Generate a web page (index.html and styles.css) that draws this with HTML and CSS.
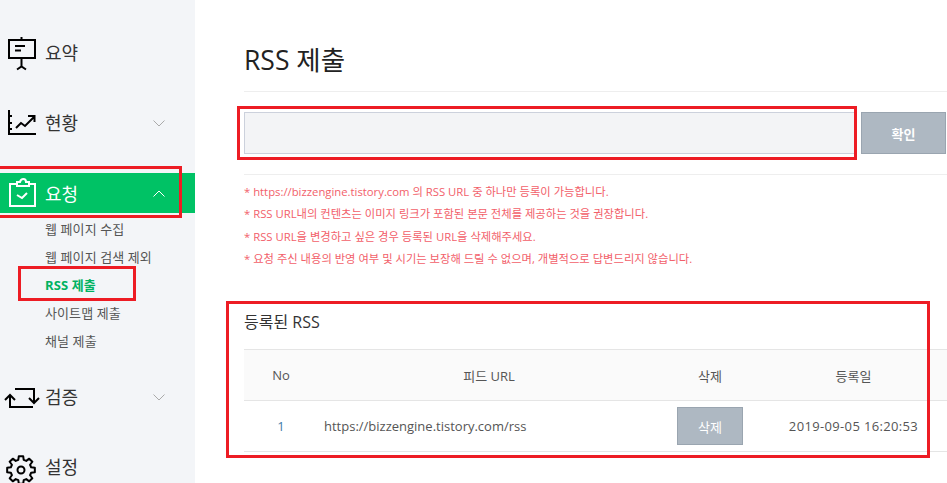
FILE: index.html

```html
<!DOCTYPE html>
<html lang="ko">
<head>
<meta charset="UTF-8">
<meta name="viewport" content="width=device-width, initial-scale=1.0">
<title>RSS 제출</title>
<link rel="stylesheet" href="styles.css">
</head>
<body>
<div class="page">
  <nav class="sidebar">
    <a class="menu">
      <svg class="icon" viewBox="0 0 32 34" fill="none" stroke="#000" stroke-width="2"><path d="M3 4h26v18H3zM15.500 1v3M15.500 22v9M11 33.500l4.500-3 4.500 3M9 10h10M9 14.500h6"/></svg>
      <span class="menu-label">요약</span>
    </a>
    <a class="menu">
      <svg class="icon" viewBox="0 0 32 34" fill="none" stroke="#000" stroke-width="2"><path d="M3 4v24h27M3 10h3M3 17h3M3 23h3M10 22l5-5 4 3 9-9M22 10h6.500v6"/></svg>
      <span class="menu-label">현황</span>
      <svg class="chev" viewBox="0 0 12 7" fill="none" stroke="#aaa"><path d="M.5.500l5.500 5.500L11.500.500"/></svg>
    </a>
    <a class="menu active">
      <svg class="icon" viewBox="0 0 32 34" fill="none" stroke="#fff" stroke-width="2"><path d="M11 8H4v22h25V8h-7M11 10V6h3c1-4 6-4 6 0h3v4zM11 19l5 3 5-5"/></svg>
      <span class="menu-label">요청</span>
      <svg class="chev" viewBox="0 0 12 7" fill="none" stroke="#fff"><path d="M.5 6.500L6 1l5.500 5.500"/></svg>
    </a>
    <ul class="submenu">
      <li>웹 페이지 수집</li>
      <li>웹 페이지 검색 제외</li>
      <li class="current">RSS 제출</li>
      <li>사이트맵 제출</li>
      <li>채널 제출</li>
    </ul>
    <a class="menu after-sub">
      <svg class="icon" viewBox="0 0 32 34" fill="none" stroke="#000" stroke-width="2"><path d="M9 9h19v13M23 18l5 5 5-5M-1 20l5-5 5 5M4 15v12h23"/></svg>
      <span class="menu-label">검증</span>
      <svg class="chev" viewBox="0 0 12 7" fill="none" stroke="#aaa"><path d="M.5.500l5.500 5.500L11.500.500"/></svg>
    </a>
    <a class="menu">
      <svg class="icon" viewBox="0 0 32 34" fill="none" stroke="#000" stroke-width="2" stroke-linejoin="round"><g transform="translate(15 20)"><circle r="3.500"/><path d="M10.140-2.720L13.830-2.190V2.190L10.140 2.720L9.090 5.250L11.330 8.230L8.230 11.330L5.250 9.090L2.720 10.140L2.190 13.830H-2.190L-2.720 10.140L-5.250 9.090L-8.230 11.330L-11.330 8.230L-9.090 5.250L-10.140 2.720L-13.830 2.190V-2.190L-10.140-2.720L-9.090-5.250L-11.330-8.230L-8.230-11.330L-5.250-9.090L-2.720-10.140L-2.190-13.830H2.190L2.720-10.140L5.250-9.090L8.230-11.330L11.330-8.230L9.090-5.250Z"/></g></svg>
      <span class="menu-label">설정</span>
    </a>
  </nav>

  <main class="content">
    <h1 class="title">RSS 제출</h1>
    <div class="url-form">
      <input class="url-input" type="text">
      <button class="btn btn-ok">확인</button>
    </div>
    <ul class="notes">
      <li>* https://bizzengine.tistory.com 의 RSS URL 중 하나만 등록이 가능합니다.</li>
      <li>* RSS URL내의 컨텐츠는 이미지 링크가 포함된 본문 전체를 제공하는 것을 권장합니다.</li>
      <li>* RSS URL을 변경하고 싶은 경우 등록된 URL을 삭제해주세요.</li>
      <li>* 요청 주신 내용의 반영 여부 및 시기는 보장해 드릴 수 없으며, 개별적으로 답변드리지 않습니다.</li>
    </ul>
    <h2 class="sub-title">등록된 RSS</h2>
    <table class="rss-table">
      <colgroup><col class="c-no"><col class="c-url"><col class="c-del"><col class="c-date"></colgroup>
      <thead>
        <tr><th>No</th><th>피드 URL</th><th>삭제</th><th>등록일</th></tr>
      </thead>
      <tbody>
        <tr>
          <td class="num">1</td>
          <td class="url">https://bizzengine.tistory.com/rss</td>
          <td><button class="btn btn-del">삭제</button></td>
          <td class="date">2019-09-05 16:20:53</td>
        </tr>
      </tbody>
    </table>
  </main>

  <div class="mark mark-menu"></div>
  <div class="mark mark-sub"></div>
  <div class="mark mark-input"></div>
  <div class="mark mark-table"></div>
</div>
</body>
</html>
```

FILE: styles.css

```css
*{box-sizing:border-box;}
html,body{margin:0;padding:0;height:100%;overflow:hidden;}
body{font-family:"Open Sans","Noto Sans CJK KR",sans-serif;color:#333;background:#fff;}
.page{position:relative;display:flex;width:947px;height:483px;overflow:hidden;}

/* sidebar */
.sidebar{width:195px;flex:none;background:#f3f5f8;padding-top:33px;}
.menu{display:flex;align-items:center;height:40px;margin-bottom:30px;padding-left:6px;color:#333;}
.menu .icon{width:32px;height:34px;flex:none;overflow:visible;}
.menu-label{margin-left:7px;padding-bottom:3px;font-size:18px;font-family:"Noto Sans CJK KR",sans-serif;}
.chev{width:12px;height:7px;margin-left:auto;margin-right:30px;}
.menu.active{background:#00c265;color:#fff;margin-bottom:2px;}
.menu.active .menu-label{padding-bottom:1px;}
.submenu{list-style:none;margin:0 0 22px;padding:0 0 0 45px;font-size:13px;letter-spacing:.1px;color:#555;}
.submenu li{height:28px;line-height:28px;white-space:nowrap;}
.submenu .current{color:#00b261;font-weight:700;}

/* main */
.content{flex:1;min-width:0;padding:34px 0 0 49px;}
.title{margin:0;height:58px;padding-bottom:6px;font-size:26.500px;font-weight:400;line-height:52px;color:#222;border-bottom:1px solid #eee;}
.url-form{display:flex;gap:5px;padding:20px 0;border-bottom:1px solid #eee;}
.url-input{width:612px;height:42px;background:#f3f4f6;border:1px solid #ccd1dc;}
.btn{background:#aeb8c2;border:1px solid #9aa5b0;color:#fff;font-family:inherit;font-weight:700;font-size:13px;padding:0;}
.btn-ok{width:85px;height:42px;}
.notes{list-style:none;margin:6px 0 0;padding:0;font-size:11.300px;color:#f2606a;}
.notes li{height:22.300px;line-height:22px;white-space:nowrap;}
.sub-title{margin:38px 0 0;height:26px;font-size:16px;font-weight:400;line-height:28px;color:#333;}
.rss-table{width:703px;margin-top:15px;table-layout:fixed;border-collapse:collapse;font-size:13px;color:#555;}
.c-no{width:74px;}
.c-url{width:342px;}
.c-del{width:100px;}
.c-date{width:187px;}
.rss-table th{height:51px;background:#fafafa;font-weight:400;border-top:1px solid #e5e5e5;border-bottom:1px solid #e5e5e5;text-align:center;}
.rss-table td{height:51px;border-bottom:1px solid #e5e5e5;text-align:center;}
.rss-table .url{text-align:left;padding-left:6px;}
.rss-table .num{color:#3f7cab;}
.rss-table .date{letter-spacing:.35px;}
.btn-del{width:66px;height:38px;font-weight:400;}

/* red annotation boxes */
.mark{position:absolute;border:3px solid #ed1c24;pointer-events:none;}
.mark-menu{left:-3px;top:166px;width:185px;height:52px;}
.mark-sub{left:18px;top:266px;width:118px;height:35px;}
.mark-input{left:237px;top:106px;width:620px;height:54px;}
.mark-table{left:226px;top:301px;width:704px;height:157px;}
```
